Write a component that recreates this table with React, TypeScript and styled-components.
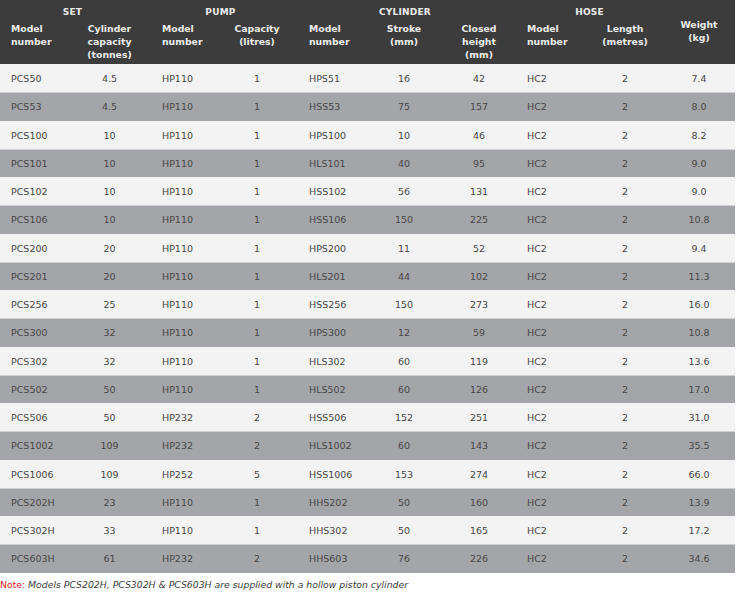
import styled, { createGlobalStyle } from 'styled-components';

const GlobalStyle = createGlobalStyle`
  html, body {
    margin: 0;
    padding: 0;
    background: #ffffff;
  }
  body {
    font-family: 'DejaVu Sans', 'Noto Sans', sans-serif;
  }
`;

const COLUMNS = '68px 83px 65px 82px 68px 76px 74px 71px 76px 72px';

export const WrapperSpecs = styled.div`
  width: 735px;
`;

export const HeaderBlock = styled.div`
  display: grid;
  grid-template-columns: ${COLUMNS};
  grid-template-rows: 21px 43px;
  background: #3c3c3c;
  color: #ececec;
  font-weight: bold;
  font-size: 9.3px;
  line-height: 13px;
`;

export const GroupLabel = styled.div<{ $from: number; $to: number; $shift?: number }>`
  grid-column: ${p => p.$from} / ${p => p.$to};
  grid-row: 1;
  text-align: center;
  padding-top: 6px;
  padding-right: ${p => p.$shift ?? 0}px;
  font-size: 9px;
  letter-spacing: 0.2px;
`;

export const HeadCell = styled.div<{ $align: 'left' | 'center'; $tall?: boolean }>`
  grid-row: ${p => (p.$tall ? '1 / 3' : '2')};
  text-align: ${p => p.$align};
  padding-left: ${p => (p.$align === 'left' ? '11px' : '0')};
  padding-top: 1px;
  ${p => p.$tall && 'display: flex; align-items: center; justify-content: center; padding-bottom: 3px;'}
`;

export const DataRow = styled.div<{ $shade: boolean }>`
  display: grid;
  grid-template-columns: ${COLUMNS};
  align-items: center;
  height: 28.25px;
  box-sizing: border-box;
  background: ${p => (p.$shade ? '#a4a5a8' : '#f3f3f3')};
  border-top: 1px solid ${p => (p.$shade ? '#cfcfd1' : '#f3f3f3')};
  color: #474747;
  font-size: 9.5px;
`;

export const Cell = styled.div<{ $align: 'left' | 'center' }>`
  text-align: ${p => p.$align};
  padding-left: ${p => (p.$align === 'left' ? '11px' : '0')};
`;

export const Note = styled.p`
  margin: 6px 0 0 0;
  font-size: 9.3px;
  font-style: italic;
  color: #3c3c3c;
`;

export const NoteLabel = styled.span`
  color: #e8212b;
  font-style: normal;
`;

type Spec = string[];

const rows: Spec[] = [
  ['PCS50', '4.5', 'HP110', '1', 'HPS51', '16', '42', 'HC2', '2', '7.4'],
  ['PCS53', '4.5', 'HP110', '1', 'HSS53', '75', '157', 'HC2', '2', '8.0'],
  ['PCS100', '10', 'HP110', '1', 'HPS100', '10', '46', 'HC2', '2', '8.2'],
  ['PCS101', '10', 'HP110', '1', 'HLS101', '40', '95', 'HC2', '2', '9.0'],
  ['PCS102', '10', 'HP110', '1', 'HSS102', '56', '131', 'HC2', '2', '9.0'],
  ['PCS106', '10', 'HP110', '1', 'HSS106', '150', '225', 'HC2', '2', '10.8'],
  ['PCS200', '20', 'HP110', '1', 'HPS200', '11', '52', 'HC2', '2', '9.4'],
  ['PCS201', '20', 'HP110', '1', 'HLS201', '44', '102', 'HC2', '2', '11.3'],
  ['PCS256', '25', 'HP110', '1', 'HSS256', '150', '273', 'HC2', '2', '16.0'],
  ['PCS300', '32', 'HP110', '1', 'HPS300', '12', '59', 'HC2', '2', '10.8'],
  ['PCS302', '32', 'HP110', '1', 'HLS302', '60', '119', 'HC2', '2', '13.6'],
  ['PCS502', '50', 'HP110', '1', 'HLS502', '60', '126', 'HC2', '2', '17.0'],
  ['PCS506', '50', 'HP232', '2', 'HSS506', '152', '251', 'HC2', '2', '31.0'],
  ['PCS1002', '109', 'HP232', '2', 'HLS1002', '60', '143', 'HC2', '2', '35.5'],
  ['PCS1006', '109', 'HP252', '5', 'HSS1006', '153', '274', 'HC2', '2', '66.0'],
  ['PCS202H', '23', 'HP110', '1', 'HHS202', '50', '160', 'HC2', '2', '13.9'],
  ['PCS302H', '33', 'HP110', '1', 'HHS302', '50', '165', 'HC2', '2', '17.2'],
  ['PCS603H', '61', 'HP232', '2', 'HHS603', '76', '226', 'HC2', '2', '34.6'],
];

// left-aligned columns are the model numbers, the rest are centred
const align = (i: number): 'left' | 'center' => ([0, 2, 4, 7].includes(i) ? 'left' : 'center');

const headings: string[][] = [
  ['Model', 'number'],
  ['Cylinder', 'capacity', '(tonnes)'],
  ['Model', 'number'],
  ['Capacity', '(litres)'],
  ['Model', 'number'],
  ['Stroke', '(mm)'],
  ['Closed', 'height', '(mm)'],
  ['Model', 'number'],
  ['Length', '(metres)'],
  ['Weight', '(kg)'],
];

export default function App() {
  return (
    <>
      <GlobalStyle />
      <WrapperSpecs>
        <HeaderBlock>
          <GroupLabel $from={1} $to={3} $shift={6}>SET</GroupLabel>
          <GroupLabel $from={3} $to={5} $shift={8}>PUMP</GroupLabel>
          <GroupLabel $from={5} $to={8} $shift={4}>CYLINDER</GroupLabel>
          <GroupLabel $from={8} $to={10}>HOSE</GroupLabel>
          {headings.map((lines, i) => (
            <HeadCell key={i} $align={align(i)} $tall={i === 9}>
              <div>
                {lines.map(l => (
                  <div key={l}>{l}</div>
                ))}
              </div>
            </HeadCell>
          ))}
        </HeaderBlock>
        {rows.map((row, r) => (
          <DataRow key={row[0]} $shade={r % 2 === 1}>
            {row.map((value, i) => (
              <Cell key={i} $align={align(i)}>
                {value}
              </Cell>
            ))}
          </DataRow>
        ))}
        <Note>
          <NoteLabel>Note:</NoteLabel> Models PCS202H, PCS302H &amp; PCS603H are supplied with a hollow piston cylinder
        </Note>
      </WrapperSpecs>
    </>
  );
}
